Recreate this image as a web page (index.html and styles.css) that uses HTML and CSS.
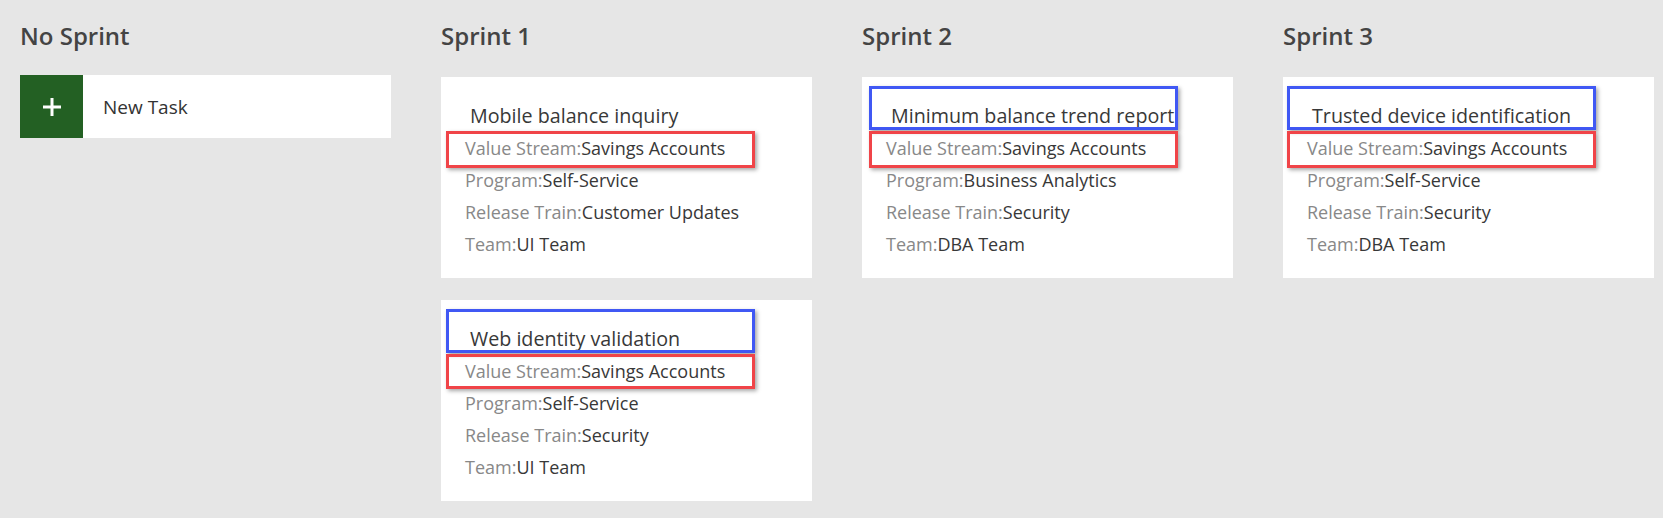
FILE: index.html
```html
<!DOCTYPE html>
<html>
    <head>
        <link rel="stylesheet" href="styles.css">
    </head>
    <body>
        <div class="board">
            <div class="column">
                <h2 class="column-title">No Sprint</h2>
                <div class="new-task">
                    <div class="new-task-icon">
                        <svg width="20" height="20" viewBox="0 0 20 20">
                            <rect x="8.5" y="1" width="3" height="18" fill="#fff"/>
                            <rect x="1" y="8.5" width="18" height="3" fill="#fff"/>
                        </svg>
                    </div>
                    <span class="new-task-text">New Task</span>
                </div>
            </div>

            <div class="column">
                <h2 class="column-title">Sprint 1</h2>
                <div class="card">
                    <div class="card-title">Mobile balance inquiry</div>
                    <div class="field"><span class="label">Value Stream:</span>Savings Accounts</div>
                    <div class="field"><span class="label">Program:</span>Self-Service</div>
                    <div class="field"><span class="label">Release Train:</span>Customer Updates</div>
                    <div class="field"><span class="label">Team:</span>UI Team</div>
                    <div class="mark mark-field"></div>
                </div>
                <div class="card">
                    <div class="card-title">Web identity validation</div>
                    <div class="field"><span class="label">Value Stream:</span>Savings Accounts</div>
                    <div class="field"><span class="label">Program:</span>Self-Service</div>
                    <div class="field"><span class="label">Release Train:</span>Security</div>
                    <div class="field"><span class="label">Team:</span>UI Team</div>
                    <div class="mark mark-title"></div>
                    <div class="mark mark-field mark-short"></div>
                </div>
            </div>

            <div class="column">
                <h2 class="column-title">Sprint 2</h2>
                <div class="card">
                    <div class="card-title">Minimum balance trend report</div>
                    <div class="field"><span class="label">Value Stream:</span>Savings Accounts</div>
                    <div class="field"><span class="label">Program:</span>Business Analytics</div>
                    <div class="field"><span class="label">Release Train:</span>Security</div>
                    <div class="field"><span class="label">Team:</span>DBA Team</div>
                    <div class="mark mark-title shift-right"></div>
                    <div class="mark mark-field shift-right"></div>
                </div>
            </div>

            <div class="column">
                <h2 class="column-title">Sprint 3</h2>
                <div class="card">
                    <div class="card-title">Trusted device identification</div>
                    <div class="field"><span class="label">Value Stream:</span>Savings Accounts</div>
                    <div class="field"><span class="label">Program:</span>Self-Service</div>
                    <div class="field"><span class="label">Release Train:</span>Security</div>
                    <div class="field"><span class="label">Team:</span>DBA Team</div>
                    <div class="mark mark-title shift-left"></div>
                    <div class="mark mark-field shift-left"></div>
                </div>
            </div>
        </div>
    </body>
</html>
```

FILE: styles.css
```css
body{
    margin:0;
    background-color: #e6e6e6;
    font-family: "Open Sans", "Noto Sans", sans-serif;
    color:#333;
}
.board{
    display:grid;
    grid-template-columns: repeat(4, 371px);
    column-gap:50px;
    padding-left:20px;
}
.column{
    display:flex;
    flex-direction: column;
    gap:22px;
}
.column-title{
    margin:0;
    height:55px;
    padding-top:18px;
    box-sizing: border-box;
    font-size:24px;
    font-weight:600;
    line-height:36px;
    color:#444;
}
.new-task{
    display:flex;
    align-items: center;
    height:63px;
    background-color: white;
    margin-top:-2px;
}
.new-task-icon{
    width:63px;
    height:63px;
    background-color: #236023;
    display:flex;
    align-items: center;
    justify-content: center;
}
.new-task-text{
    margin-left:20px;
    font-size:19px;
    color:#333;
}
/* task card */
.card{
    position:relative;
    background-color: white;
    height:201px;
    box-sizing: border-box;
    padding:22px 20px 0 24px;
}
.card-title{
    font-size:19.7px;
    line-height:33px;
    padding-left:5px;
    color:#383838;
    white-space: nowrap;
}
.field{
    font-size:18px;
    line-height:32px;
    color:#383838;
    white-space: nowrap;
}
.label{
    color:#888;
}
/* annotation boxes */
.mark{
    position:absolute;
    left:5px;
    width:309px;
    box-sizing: border-box;
    border:3px solid;
    box-shadow: 2px 2px 4px rgba(0,0,0,0.35);
}
.mark-title{
    top:9px;
    height:44px;
    border-color:#4058f4;
}
.mark-field{
    top:54px;
    height:37px;
    border-color:#f04448;
}
.mark-short{
    height:35px;
}
.shift-right{
    left:7px;
}
.shift-left{
    left:4px;
}
```
